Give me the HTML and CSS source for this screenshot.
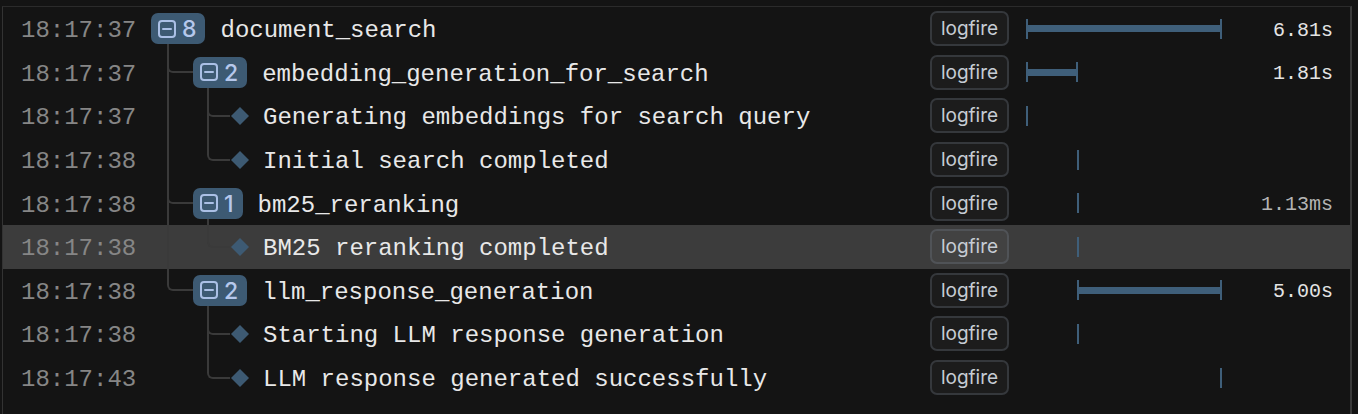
FILE: index.html
```html
<!DOCTYPE html>
<html>
<head>
<meta charset="utf-8">
<link rel="stylesheet" href="styles.css">
</head>
<body>
<div class="panel">

  <div class="row">
    <div class="time">18:17:37</div>
    <div class="tree">
      <span class="node l0"><svg class="ico" width="18" height="18" viewBox="0 0 18 18"><rect x="1" y="1" width="16" height="16" rx="3"/><line x1="5" y1="9" x2="13" y2="9"/></svg><span class="count">8</span></span>
      <span class="name">document_search</span>
    </div>
    <div class="svc"><span class="tag">logfire</span></div>
    <div class="tl"><span class="bar" style="margin-left:0px;width:196px"></span></div>
    <div class="dur">6.81s</div>
  </div>

  <div class="row">
    <div class="time">18:17:37</div>
    <div class="tree">
      <span class="g tee"></span>
      <span class="node l1"><svg class="ico" width="18" height="18" viewBox="0 0 18 18"><rect x="1" y="1" width="16" height="16" rx="3"/><line x1="5" y1="9" x2="13" y2="9"/></svg><span class="count">2</span></span>
      <span class="name">embedding_generation_for_search</span>
    </div>
    <div class="svc"><span class="tag">logfire</span></div>
    <div class="tl"><span class="bar" style="margin-left:0px;width:52px"></span></div>
    <div class="dur">1.81s</div>
  </div>

  <div class="row">
    <div class="time">18:17:37</div>
    <div class="tree">
      <span class="g pipe"></span>
      <span class="g g2 tee"></span>
      <svg class="dia" width="20" height="20" viewBox="0 0 20 20"><path d="M10 1L19 10L10 19L1 10Z"/></svg>
      <span class="name leaf">Generating embeddings for search query</span>
    </div>
    <div class="svc"><span class="tag">logfire</span></div>
    <div class="tl"><span class="tick" style="margin-left:0px"></span></div>
    <div class="dur"></div>
  </div>

  <div class="row">
    <div class="time">18:17:38</div>
    <div class="tree">
      <span class="g pipe"></span>
      <span class="g g2 end"></span>
      <svg class="dia" width="20" height="20" viewBox="0 0 20 20"><path d="M10 1L19 10L10 19L1 10Z"/></svg>
      <span class="name leaf">Initial search completed</span>
    </div>
    <div class="svc"><span class="tag">logfire</span></div>
    <div class="tl"><span class="tick" style="margin-left:51px"></span></div>
    <div class="dur"></div>
  </div>

  <div class="row">
    <div class="time">18:17:38</div>
    <div class="tree">
      <span class="g tee"></span>
      <span class="node l1"><svg class="ico" width="18" height="18" viewBox="0 0 18 18"><rect x="1" y="1" width="16" height="16" rx="3"/><line x1="5" y1="9" x2="13" y2="9"/></svg><span class="count">1</span></span>
      <span class="name">bm25_reranking</span>
    </div>
    <div class="svc"><span class="tag">logfire</span></div>
    <div class="tl"><span class="tick" style="margin-left:51px"></span></div>
    <div class="dur dim">1.13ms</div>
  </div>

  <div class="row active">
    <div class="time">18:17:38</div>
    <div class="tree">
      <span class="g pipe"></span>
      <span class="g g2 end"></span>
      <svg class="dia" width="20" height="20" viewBox="0 0 20 20"><path d="M10 1L19 10L10 19L1 10Z"/></svg>
      <span class="name leaf">BM25 reranking completed</span>
    </div>
    <div class="svc"><span class="tag">logfire</span></div>
    <div class="tl"><span class="tick" style="margin-left:51px"></span></div>
    <div class="dur"></div>
  </div>

  <div class="row">
    <div class="time">18:17:38</div>
    <div class="tree">
      <span class="g end"></span>
      <span class="node l1"><svg class="ico" width="18" height="18" viewBox="0 0 18 18"><rect x="1" y="1" width="16" height="16" rx="3"/><line x1="5" y1="9" x2="13" y2="9"/></svg><span class="count">2</span></span>
      <span class="name">llm_response_generation</span>
    </div>
    <div class="svc"><span class="tag">logfire</span></div>
    <div class="tl"><span class="bar" style="margin-left:51px;width:145px"></span></div>
    <div class="dur">5.00s</div>
  </div>

  <div class="row">
    <div class="time">18:17:38</div>
    <div class="tree">
      <span class="g"></span>
      <span class="g g2 tee"></span>
      <svg class="dia" width="20" height="20" viewBox="0 0 20 20"><path d="M10 1L19 10L10 19L1 10Z"/></svg>
      <span class="name leaf">Starting LLM response generation</span>
    </div>
    <div class="svc"><span class="tag">logfire</span></div>
    <div class="tl"><span class="tick" style="margin-left:51px"></span></div>
    <div class="dur"></div>
  </div>

  <div class="row">
    <div class="time">18:17:43</div>
    <div class="tree">
      <span class="g"></span>
      <span class="g g2 end"></span>
      <svg class="dia" width="20" height="20" viewBox="0 0 20 20"><path d="M10 1L19 10L10 19L1 10Z"/></svg>
      <span class="name leaf">LLM response generated successfully</span>
    </div>
    <div class="svc"><span class="tag">logfire</span></div>
    <div class="tl"><span class="tick" style="margin-left:194px"></span></div>
    <div class="dur"></div>
  </div>

</div>
</body>
</html>
```

FILE: styles.css
```css
html, body {
  margin: 0;
  padding: 0;
  background: #141414;
  height: 100%;
  overflow: hidden;
}

.panel {
  margin: 6px 0 0 2px;
  width: 1347px;
  height: 420px;
  border-top: 1px solid #2b2b2b;
  border-left: 1px solid #333333;
  border-right: 2px solid #3a3a3a;
  font-family: "Liberation Mono", "DejaVu Sans Mono", monospace;
}

.row {
  display: grid;
  grid-template-columns: 148px 1fr 96px 196px 111px;
  padding-right: 17px;
  height: 43.6px;
  align-items: center;
}

.row.active {
  background: #3c3c3c;
}

.time {
  padding-top: 5px;
  padding-left: 18px;
  font-size: 24px;
  color: #868686;
  line-height: 1;
}

.tree {
  align-self: stretch;
  display: flex;
  align-items: center;
}

.g {
  flex: none;
  align-self: stretch;
  width: 42px;
  position: relative;
}

.g.g2 {
  width: 37px;
}

.g.pipe::before,
.g.tee::before {
  content: "";
  position: absolute;
  left: 16px;
  top: 0;
  bottom: 0;
  width: 2px;
  background: #3a3a3a;
}

.g.tee::after,
.g.end::after {
  content: "";
  position: absolute;
  left: 16px;
  right: 0;
  top: 0;
  height: calc(50% - 1px);
  border-left: 2px solid #3a3a3a;
  border-bottom: 2px solid #3a3a3a;
  border-bottom-left-radius: 6px;
}

.g.g2::before,
.g.g2::after {
  left: 14px;
}

.node {
  position: relative;
  flex: none;
  display: flex;
  align-items: center;
  height: 31px;
  padding: 0 9px 0 7px;
  border-radius: 7px;
  background: #3d5a73;
}

.node::after {
  content: "";
  position: absolute;
  top: 100%;
  width: 2px;
  height: 9px;
  background: #3a3a3a;
}

.node.l0::after {
  left: 16px;
}

.node.l1::after {
  left: 14px;
}

.ico {
  display: block;
  fill: none;
  stroke: #abc0e6;
  stroke-width: 2;
  stroke-linecap: round;
}

.count {
  margin-left: 6px;
  padding-top: 2px;
  font-family: Inter, "Noto Sans", sans-serif;
  font-size: 23px;
  font-weight: 500;
  line-height: 1;
  color: #b6c8ec;
}

.dia {
  flex: none;
  display: block;
  fill: #3d5a73;
}

.name {
  margin-left: 15px;
  padding-top: 5px;
  font-size: 24px;
  line-height: 1;
  color: #e8e8e8;
  white-space: nowrap;
}

.name.leaf {
  margin-left: 13px;
}

.svc {
  display: flex;
  align-items: center;
}

.tag {
  box-sizing: border-box;
  width: 79px;
  height: 35px;
  display: flex;
  align-items: center;
  justify-content: center;
  border: 2px solid #35383c;
  border-radius: 7px;
  background: rgba(255, 255, 255, 0.035);
  font-family: Inter, "Noto Sans", sans-serif;
  font-size: 19px;
  color: #c6ccd4;
}

.row.active .tag {
  border-color: #505357;
}

.tl {
  display: flex;
  align-items: center;
}

.bar {
  box-sizing: border-box;
  flex: none;
  height: 20px;
  border-left: 2px solid #3f5f7a;
  border-right: 2px solid #3f5f7a;
  background: linear-gradient(#3f5f7a, #3f5f7a) center / 100% 7px no-repeat;
}

.tick {
  flex: none;
  width: 2px;
  height: 20px;
  background: #3f5f7a;
}

.dur {
  padding-top: 4px;
  text-align: right;
  font-size: 20px;
  line-height: 1;
  color: #e4e4e4;
}

.dur.dim {
  color: #b4b4b4;
}
```
